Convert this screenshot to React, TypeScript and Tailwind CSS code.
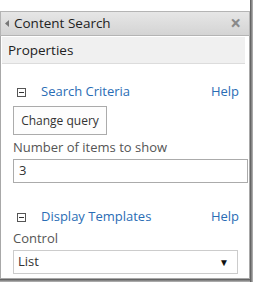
import React from "react";

export default function App() {
  const font = { fontFamily: '"Open Sans", "Noto Sans", sans-serif' };
  return (
    <div className="w-[254px] h-[285px] bg-white relative overflow-hidden" style={font}>
      <div className="flex">
        <div className="w-[250px] flex flex-col">
          <div className="h-[11px] bg-white" />
          <div className="h-[25px] border border-[#b4b4b4] bg-gradient-to-b from-[#e6e6e6] to-[#d4d4d4] flex items-center pl-[4px] pr-[8px]">
            <svg width="4" height="7" viewBox="0 0 4 7" className="mr-[5px]">
              <polygon points="4,0 0,3.5 4,7" fill="#777" />
            </svg>
            <span className="text-[13.5px] text-[#222] leading-none">Content Search</span>
            <span className="ml-auto text-[19px] font-bold text-[#8a8a8a] leading-none">×</span>
          </div>
          <div className="border-l border-r border-b border-[#a8a8a8] h-[243px] flex flex-col pt-[1px]">
            <div className="mx-[1px] mr-[4px] h-[27px] bg-[#f0f0f0] border-b border-[#dcdcdc] flex items-center pl-[6px] text-[13.5px] text-[#222]">
              Properties
            </div>
            <div className="pl-[12px] pr-[10px] pt-[20px]">
              <div className="flex items-center h-[16px]">
                <div className="w-[9px] h-[9px] border border-[#555] flex items-center justify-center ml-[4px] mr-[15px]">
                  <div className="w-[5px] h-[1px] bg-[#333]" />
                </div>
                <span className="text-[13px] text-[#2a6db5]">Search Criteria</span>
                <span className="ml-auto text-[13px] text-[#2a6db5]">Help</span>
              </div>
              <button className="mt-[6px] w-[94px] h-[29px] border border-[#ababab] bg-[#fdfdfd] text-[12px] text-[#333]">
                Change query
              </button>
              <div className="mt-[3px] text-[13px] text-[#555] h-[18px] leading-[18px]">Number of items to show</div>
              <div className="mt-[3px] mr-[-9px] h-[24px] border border-[#ababab] flex items-center pl-[5px] text-[13px] text-[#333]">3</div>
              <div className="flex items-center h-[16px] mt-[26px]">
                <div className="w-[9px] h-[9px] border border-[#555] flex items-center justify-center ml-[4px] mr-[15px]">
                  <div className="w-[5px] h-[1px] bg-[#333]" />
                </div>
                <span className="text-[13px] text-[#2a6db5]">Display Templates</span>
                <span className="ml-auto text-[13px] text-[#2a6db5]">Help</span>
              </div>
              <div className="mt-[4px] text-[13px] text-[#555] h-[18px] leading-[18px]">Control</div>
              <div className="mt-[3px] mr-[1px] h-[24px] border border-[#cccccc] flex items-center pl-[4px] pr-[8px] text-[13px] text-[#333]">
                List
                <span className="ml-auto text-[10px] text-[#111]">▼</span>
              </div>
            </div>
          </div>
          <div className="h-[3px] bg-gradient-to-b from-[#555] to-[#bbb]" />
        </div>
        <div className="w-[3px] h-[282px] bg-gradient-to-r from-[#555] to-[#bbb]" />
      </div>
    </div>
  );
}
